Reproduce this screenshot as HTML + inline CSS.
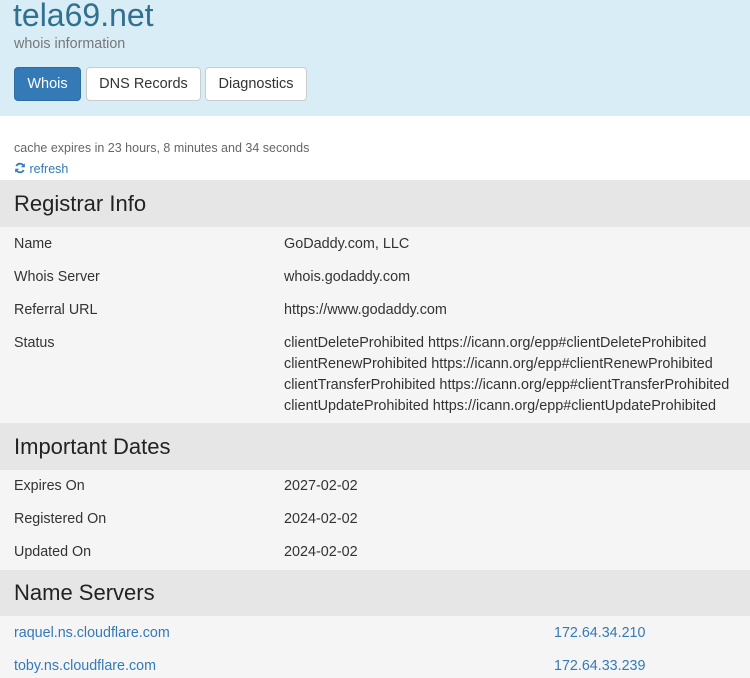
<!DOCTYPE html>
<html><head><style>
*{margin:0;padding:0;box-sizing:border-box}
body{width:750px;height:678px;overflow:hidden;font-family:"Liberation Sans",sans-serif;color:#333;background:#fff;font-size:14px}
.hd{background:#d9edf7;height:116px;position:relative}
.t{position:absolute;left:13px;top:-3px;font-size:32px;color:#31708f}
.s{position:absolute;left:14px;top:36px;font-size:14.3px;color:#777}
.b{position:absolute;top:67px;height:34px;border:1px solid #ccc;border-radius:4px;background:#fff;font-size:14.5px;line-height:32px;text-align:center}
.b.a{background:#337ab7;border-color:#2e6da4;color:#fff}
.c{position:absolute;left:14px;top:141px;font-size:12.5px;color:#666}
.r{position:absolute;left:14px;top:162px;font-size:12.5px;color:#337ab7}
.sec{position:absolute;left:0;width:750px;background:#e6e6e6;font-size:22px;padding-left:14px;color:#222}
.row{position:absolute;left:0;width:750px;background:#f5f5f5}
.l{position:absolute;left:14px;font-size:14.3px}
.v{position:absolute;left:284px;font-size:14.4px;line-height:21px}
a{color:#337ab7;text-decoration:none}
</style></head><body>
<div class="hd">
<div class="t">tela69.net</div>
<div class="s">whois information</div>
<div class="b a" style="left:14px;width:67px">Whois</div>
<div class="b" style="left:86px;width:115px">DNS Records</div>
<div class="b" style="left:205px;width:102px">Diagnostics</div>
</div>
<div class="c">cache expires in 23 hours, 8 minutes and 34 seconds</div>
<div class="r"><svg width="12" height="12" viewBox="0 0 12 12" style="vertical-align:-1px"><path d="M10 4.5A4.2 4.2 0 0 0 2.3 4M2 7.5a4.2 4.2 0 0 0 7.7.5" fill="none" stroke="#337ab7" stroke-width="1.8"/><path d="M10.8 1.2v4H6.8zM1.2 10.8v-4h4z" fill="#337ab7"/></svg> refresh</div>

<div class="sec" style="top:180px;height:47px;line-height:47px">Registrar Info</div>
<div class="row" style="top:227px;height:196px">
<div class="l" style="top:9px">Name</div><div class="v" style="top:6px;top:7px">GoDaddy.com, LLC</div>
<div class="l" style="top:42px">Whois Server</div><div class="v" style="top:40px">whois.godaddy.com</div>
<div class="l" style="top:75px">Referral URL</div><div class="v" style="top:73px">https://www.godaddy.com</div>
<div class="l" style="top:108px">Status</div><div class="v" style="top:106px">clientDeleteProhibited https://icann.org/epp#clientDeleteProhibited<br>clientRenewProhibited https://icann.org/epp#clientRenewProhibited<br>clientTransferProhibited https://icann.org/epp#clientTransferProhibited<br>clientUpdateProhibited https://icann.org/epp#clientUpdateProhibited</div>
</div>
<div class="sec" style="top:423px;height:47px;line-height:47px">Important Dates</div>
<div class="row" style="top:470px;height:100px">
<div class="l" style="top:8px">Expires On</div><div class="v" style="top:6px">2027-02-02</div>
<div class="l" style="top:41px">Registered On</div><div class="v" style="top:39px">2024-02-02</div>
<div class="l" style="top:74px">Updated On</div><div class="v" style="top:72px">2024-02-02</div>
</div>
<div class="sec" style="top:570px;height:46px;line-height:46px">Name Servers</div>
<div class="row" style="top:616px;height:62px">
<div class="l" style="top:9px"><a>raquel.ns.cloudflare.com</a></div><div class="l" style="top:9px;left:554px"><a>172.64.34.210</a></div>
<div class="l" style="top:42px"><a>toby.ns.cloudflare.com</a></div><div class="l" style="top:42px;left:554px"><a>172.64.33.239</a></div>
</div>
</body></html>
